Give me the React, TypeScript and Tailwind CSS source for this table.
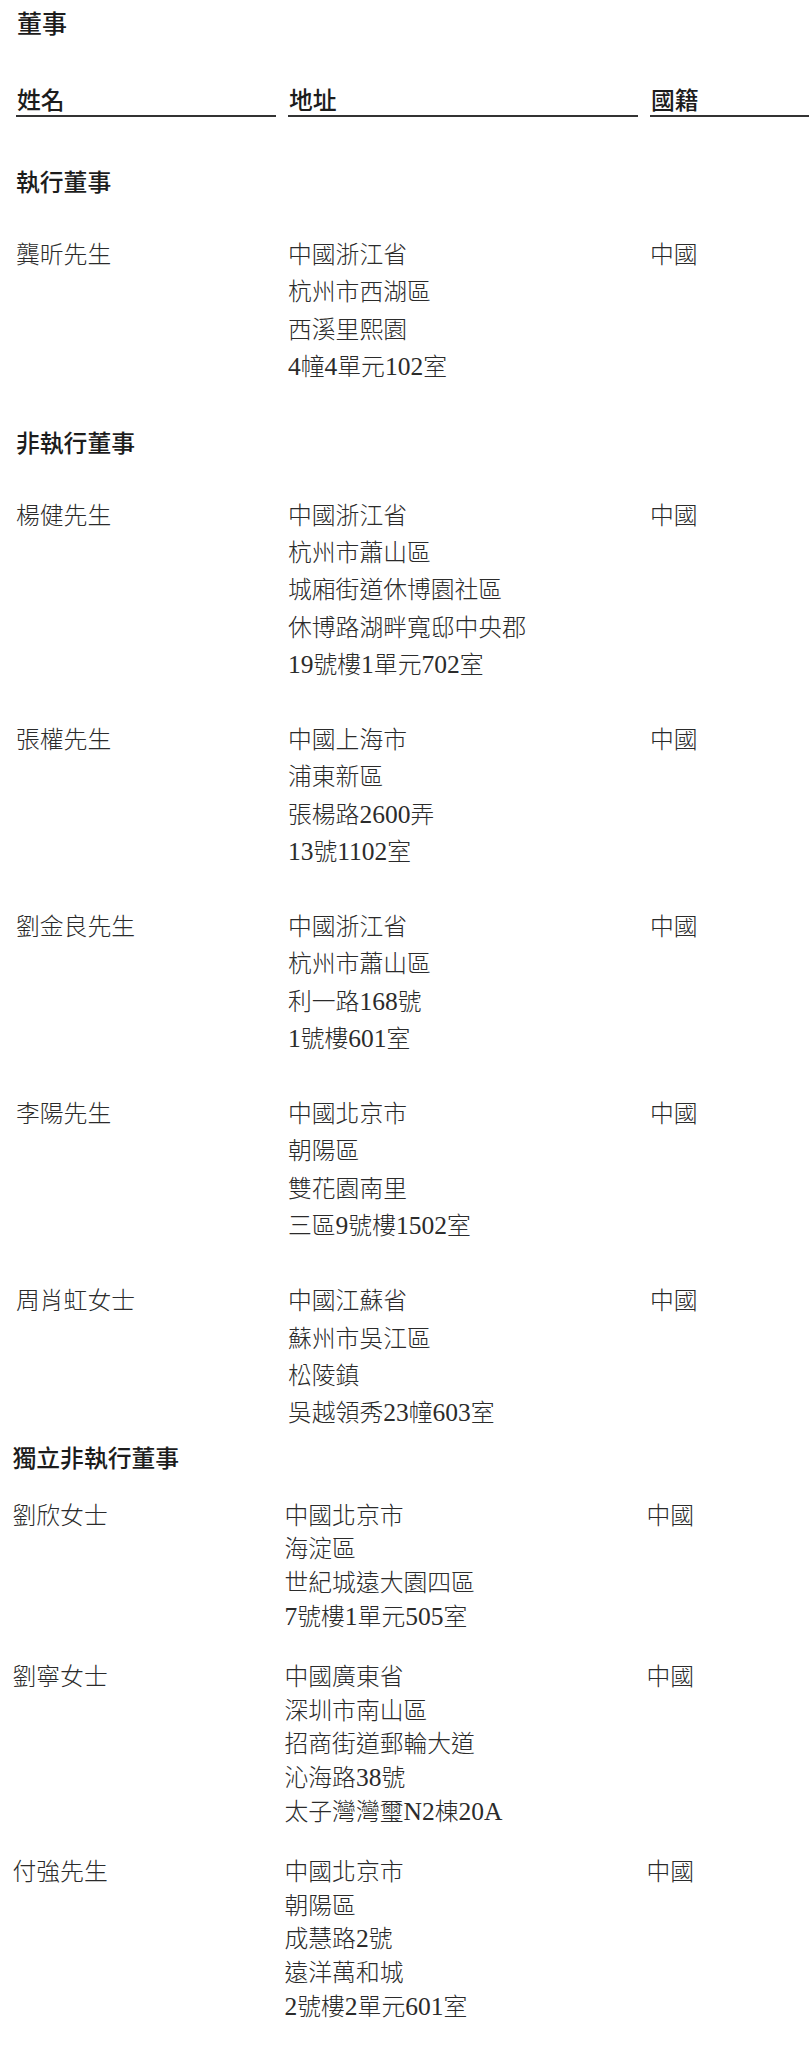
import React from "react"

type Director = { name: string; address: string[] }

const executive: Director[] = [
  { name: "龔昕先生", address: ["中國浙江省", "杭州市西湖區", "西溪里熙園", "4幢4單元102室"] },
]

const nonExecutive: Director[] = [
  {
    name: "楊健先生",
    address: ["中國浙江省", "杭州市蕭山區", "城廂街道休博園社區", "休博路湖畔寬邸中央郡", "19號樓1單元702室"],
  },
  { name: "張權先生", address: ["中國上海市", "浦東新區", "張楊路2600弄", "13號1102室"] },
  { name: "劉金良先生", address: ["中國浙江省", "杭州市蕭山區", "利一路168號", "1號樓601室"] },
  { name: "李陽先生", address: ["中國北京市", "朝陽區", "雙花園南里", "三區9號樓1502室"] },
  { name: "周肖虹女士", address: ["中國江蘇省", "蘇州市吳江區", "松陵鎮", "吳越領秀23幢603室"] },
]

const independent: Director[] = [
  { name: "劉欣女士", address: ["中國北京市", "海淀區", "世紀城遠大園四區", "7號樓1單元505室"] },
  {
    name: "劉寧女士",
    address: ["中國廣東省", "深圳市南山區", "招商街道郵輪大道", "沁海路38號", "太子灣灣璽N2棟20A"],
  },
  { name: "付強先生", address: ["中國北京市", "朝陽區", "成慧路2號", "遠洋萬和城", "2號樓2單元601室"] },
]

// latin digits in the source are set a touch larger than the CJK text
function Line({ text }: { text: string }) {
  const parts = text.split(/([0-9A-Z]+)/)
  return (
    <div>
      {parts.map((p, i) =>
        /^[0-9A-Z]+$/.test(p) ? (
          <span key={i} className="text-[25.5px] leading-none">
            {p}
          </span>
        ) : (
          <span key={i}>{p}</span>
        )
      )}
    </div>
  )
}

function Heading({ children, className = "" }: { children: React.ReactNode; className?: string }) {
  return (
    <h2
      className={`font-['Noto_Sans_CJK_TC',sans-serif] font-medium text-[23.8px] leading-[32px] text-[#1c1c1c] ${className}`}
    >
      {children}
    </h2>
  )
}

function Row({ d, wide }: { d: Director; wide: boolean }) {
  const lh = wide ? "leading-[37.4px]" : "leading-[33.7px]"
  return (
    <div className={`grid grid-cols-[260px_350px_159px] gap-x-3 ${lh}`}>
      <div>{d.name}</div>
      <div>
        {d.address.map((line) => (
          <Line key={line} text={line} />
        ))}
      </div>
      <div>中國</div>
    </div>
  )
}

export default function App() {
  return (
    <div className="w-[809px] h-[2055px] overflow-hidden bg-white pl-4 pt-[6px] font-['Liberation_Serif','Noto_Sans_CJK_TC',serif] font-light text-[23.8px] text-[#2b2b2b]">
      <h1 className="font-['Noto_Sans_CJK_TC',sans-serif] font-medium text-[25px] leading-[32px] text-[#1c1c1c] pl-px">
        董事
      </h1>

      {/* column headers */}
      <div className="mt-[45px] grid grid-cols-[260px_350px_159px] gap-x-3 font-['Noto_Sans_CJK_TC',sans-serif] font-medium text-[#1c1c1c] leading-[32px]">
        <div className="border-b-2 border-[#333] pl-px">姓名</div>
        <div className="border-b-2 border-[#333] pl-px">地址</div>
        <div className="border-b-2 border-[#333] pl-px">國籍</div>
      </div>

      <Heading className="mt-[48px]">執行董事</Heading>
      <div className="mt-[40px]">
        {executive.map((d) => (
          <Row key={d.name} d={d} wide />
        ))}
      </div>

      <Heading className="mt-[39px]">非執行董事</Heading>
      <div className="mt-[40px] flex flex-col gap-[37.4px]">
        {nonExecutive.map((d) => (
          <Row key={d.name} d={d} wide />
        ))}
      </div>

      <div className="-ml-[3.5px]">
        <Heading className="mt-[8px]">獨立非執行董事</Heading>
        <div className="mt-[27px] flex flex-col gap-[26.5px]">
          {independent.map((d) => (
            <Row key={d.name} d={d} wide={false} />
          ))}
        </div>
      </div>
    </div>
  )
}
